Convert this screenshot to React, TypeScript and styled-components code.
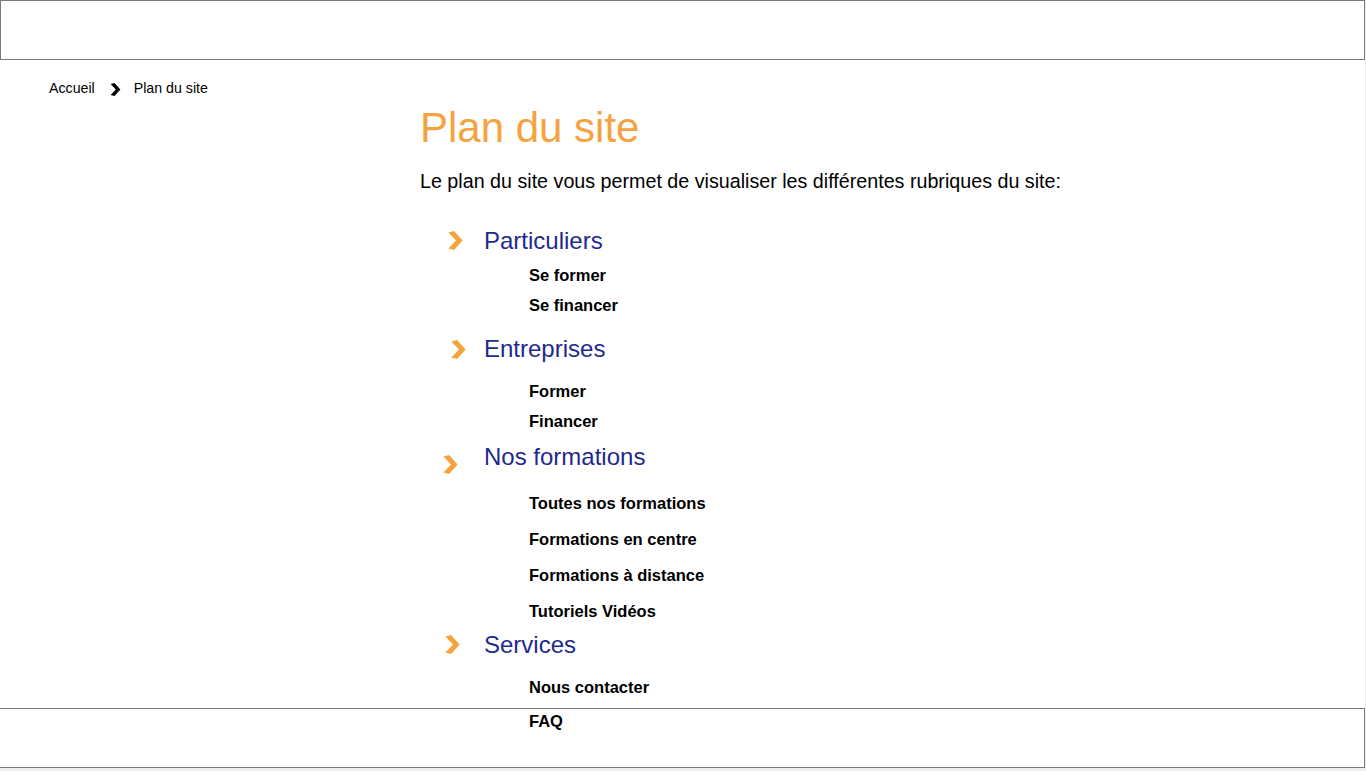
import React from "react";
import styled, { createGlobalStyle } from "styled-components";

const GlobalStyle = createGlobalStyle`
  html, body {
    margin: 0;
    padding: 0;
    background: #efefef;
    font-family: "Liberation Sans", Arial, sans-serif;
  }
  * { box-sizing: border-box; }
`;

const Page = styled.div`
  width: 1365px;
  min-height: 768px;
  background: #ffffff;
  overflow: hidden;
`;

const Header = styled.header`
  height: 60px;
  width: 1365px;
  border: 1px solid #7a7a7a;
  background: #ffffff;
`;

const Footer = styled.footer`
  position: fixed;
  left: 0;
  top: 708px;
  width: 1365px;
  height: 60px;
  border: 1px solid #7a7a7a;
  border-left: none;
  pointer-events: none;
`;

const Breadcrumb = styled.nav`
  display: flex;
  align-items: center;
  margin: 20px 0 0 49px;
  height: 16px;
  font-size: 14.2px;
  line-height: 16px;
  color: #000;
`;

const CrumbLink = styled.a`
  color: #000;
  text-decoration: none;
`;

const CrumbSep = styled.span`
  display: inline-flex;
  margin: 3px 13px 0 15px;
`;

const Main = styled.main`
  margin-left: 420px;
  padding-top: 8px;
`;

const Title = styled.h1`
  margin: 0;
  font-size: 42px;
  line-height: 48px;
  font-weight: normal;
  color: #f4a340;
`;

const Intro = styled.p`
  margin: 17px 0 0;
  font-size: 19.7px;
  line-height: 24px;
  color: #000;
`;

const Section = styled.section<{ $top: number }>`
  margin-top: ${(p) => p.$top}px;
`;

const SectionHead = styled.div`
  display: flex;
  align-items: flex-start;
  height: 28px;
`;

const Marker = styled.span<{ $x: number; $y: number }>`
  width: 64px;
  flex: none;
  padding-left: ${(p) => p.$x}px;
  padding-top: ${(p) => p.$y}px;
  display: flex;
`;

const SectionTitle = styled.a`
  font-size: 24px;
  line-height: 28px;
  color: #1f2a8e;
  text-decoration: none;
`;

const Items = styled.ul<{ $top: number; $pitch: number }>`
  list-style: none;
  margin: ${(p) => p.$top}px 0 0 109px;
  padding: 0;
  display: flex;
  flex-direction: column;
  gap: ${(p) => p.$pitch - 20}px;
`;

const Item = styled.li`
  height: 20px;
  font-size: 16.5px;
  line-height: 20px;
  font-weight: bold;
  color: #000;
`;

const Chevron = ({ color, w, h }: { color: string; w: number; h: number }) => (
  <svg width={w} height={h} viewBox="0 0 15 20">
    <polygon points="0,1.5 6,0 15,10 6,20 0,18.5 8,10" fill={color} />
  </svg>
);

type SectionData = {
  title: string;
  top: number;
  mx: number;
  my: number;
  listTop: number;
  pitch: number;
  items: string[];
};

const sections: SectionData[] = [
  { title: "Particuliers", top: 34, mx: 28, my: 4, listTop: 10, pitch: 30, items: ["Se former", "Se financer"] },
  { title: "Entreprises", top: 20, mx: 31, my: 5, listTop: 18, pitch: 30, items: ["Former", "Financer"] },
  {
    title: "Nos formations",
    top: 12,
    mx: 23,
    my: 12,
    listTop: 22,
    pitch: 36,
    items: ["Toutes nos formations", "Formations en centre", "Formations à distance", "Tutoriels Vidéos"],
  },
  { title: "Services", top: 10, mx: 25, my: 4, listTop: 18, pitch: 34, items: ["Nous contacter", "FAQ"] },
];

export default function App() {
  return (
    <>
      <GlobalStyle />
      <Page>
        <Header />
        <Breadcrumb>
          <CrumbLink href="#">Accueil</CrumbLink>
          <CrumbSep>
            <Chevron color="#000" w={11} h={13} />
          </CrumbSep>
          <span>Plan du site</span>
        </Breadcrumb>
        <Main>
          <Title>Plan du site</Title>
          <Intro>Le plan du site vous permet de visualiser les différentes rubriques du site:</Intro>
          {sections.map((s) => (
            <Section key={s.title} $top={s.top}>
              <SectionHead>
                <Marker $x={s.mx} $y={s.my}>
                  <Chevron color="#f4a33d" w={15} h={19} />
                </Marker>
                <SectionTitle href="#">{s.title}</SectionTitle>
              </SectionHead>
              <Items $top={s.listTop} $pitch={s.pitch}>
                {s.items.map((it) => (
                  <Item key={it}>{it}</Item>
                ))}
              </Items>
            </Section>
          ))}
        </Main>
      </Page>
      <Footer />
    </>
  );
}
